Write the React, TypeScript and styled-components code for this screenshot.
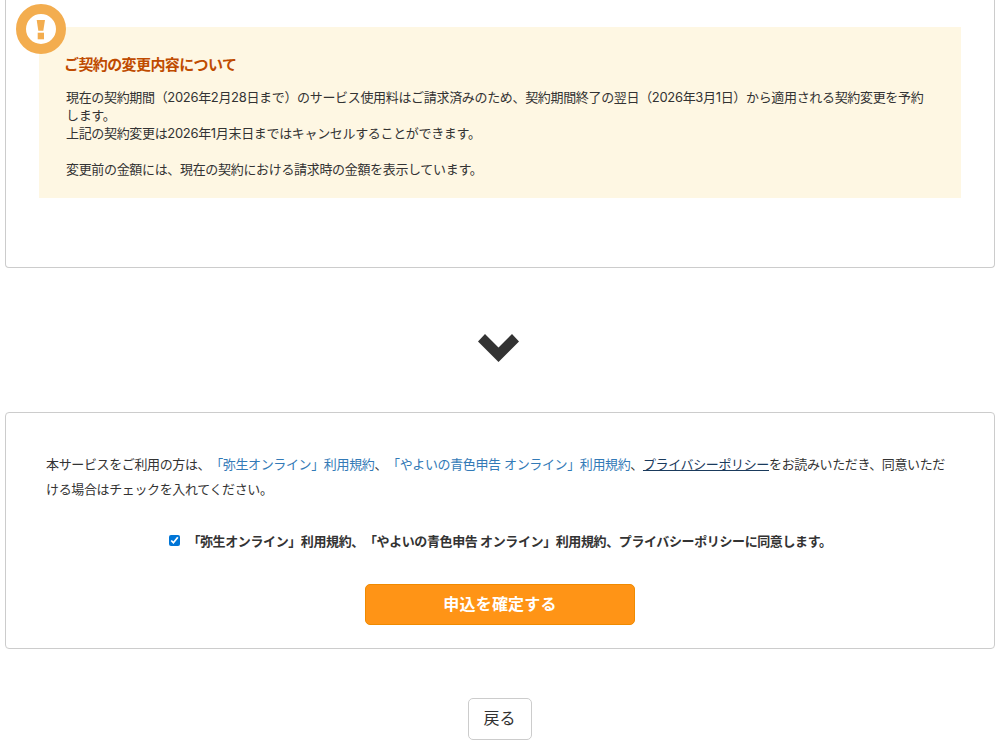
import * as React from "react";
import styled, { createGlobalStyle } from "styled-components";

const GlobalStyle = createGlobalStyle`
  html, body {
    margin: 0;
    padding: 0;
    background: #fff;
    overflow: hidden;
  }
  body {
    font-family: Inter, "Noto Sans CJK JP", sans-serif;
    font-size: 13px;
    letter-spacing: -0.33px;
    text-spacing-trim: space-all;
    color: #333;
  }
`;

const Page = styled.div`
  width: 1005px;
  height: 743px;
  padding: 0 10px 0 5px;
  box-sizing: border-box;
  overflow: hidden;
`;

const Panel = styled.section`
  border: 1px solid #ccc;
  border-radius: 4px;
  background: #fff;
  box-sizing: border-box;
`;

const NoticePanel = styled(Panel)`
  border-top: 0;
  border-radius: 0 0 4px 4px;
  padding: 27px 33px 0;
  height: 268px;
`;

const Notice = styled.div`
  position: relative;
  height: 171px;
  box-sizing: border-box;
  padding: 27px 33px 0 25px;
  background: #fef7e3;
`;

const NoticeBadge = styled.svg`
  position: absolute;
  left: -23px;
  top: -23px;
  width: 50px;
  height: 50px;
`;

const NoticeTitle = styled.h3`
  margin: 0 0 13px;
  font-size: 15px;
  line-height: 21px;
  font-weight: 700;
  letter-spacing: -0.6px;
  color: #bf4b00;
`;

const NoticeText = styled.p`
  margin: 0;
  font-size: 13px;
  line-height: 18px;
  padding-left: 2px;
`;

const ArrowRow = styled.div`
  height: 144px;
  display: flex;
  align-items: center;
  justify-content: center;
  padding: 16px 3px 0 0;
  box-sizing: border-box;
`;

const ConsentPanel = styled(Panel)`
  height: 237px;
  padding: 39px 40px 0;
`;

const ConsentText = styled.p`
  margin: 0;
  font-size: 13px;
  line-height: 25px;
  letter-spacing: -0.37px;
`;

const TermsLink = styled.a`
  color: #337ab7;
  text-decoration: none;
`;

const PolicyLink = styled.a`
  color: #1a3a5c;
  text-decoration: underline;
`;

const CheckRow = styled.label`
  display: flex;
  align-items: center;
  justify-content: center;
  gap: 7px;
  margin-top: 27px;
  height: 22px;
  font-size: 13px;
  font-weight: 700;
  letter-spacing: -0.39px;
  padding-left: 1px;
`;

const Check = styled.input`
  width: 11px;
  height: 11px;
  margin: 0;
  accent-color: #0075d6;
`;

const ButtonRow = styled.div`
  display: flex;
  justify-content: center;
  margin-top: 33px;
`;

const SubmitButton = styled.button`
  width: 270px;
  height: 41px;
  border: 1px solid #f08a00;
  border-radius: 5px;
  background: #ff9416;
  color: #fff;
  font-family: inherit;
  font-size: 16px;
  font-weight: 700;
  letter-spacing: 0.2px;
  padding: 0 0 3px;
`;

const BackRow = styled.div`
  display: flex;
  justify-content: center;
  margin-top: 49px;
  padding-right: 1px;
`;

const BackButton = styled.button`
  width: 64px;
  height: 42px;
  border: 1px solid #ccc;
  border-radius: 5px;
  background: #fff;
  color: #333;
  font-family: inherit;
  font-size: 16px;
  letter-spacing: 0;
  padding: 0 0 5px;
`;

export default function App() {
  return (
    <Page>
      <GlobalStyle />
      <NoticePanel>
        <Notice>
          <NoticeBadge viewBox="0 0 50 50">
            <circle cx="25" cy="25" r="20" fill="#fff" stroke="#f3ad4f" strokeWidth="10" />
            <path d="M20.7 16h8.3l-1.7 10.7h-5z" fill="#f3ad4f" />
            <rect x="21.7" y="28.7" width="6.3" height="6.6" fill="#f3ad4f" />
          </NoticeBadge>
          <NoticeTitle>ご契約の変更内容について</NoticeTitle>
          <NoticeText>
            現在の契約期間（2026年2月28日まで）のサービス使用料はご請求済みのため、契約期間終了の翌日（2026年3月1日）から適用される契約変更を予約します。
            <br />
            上記の契約変更は2026年1月末日まではキャンセルすることができます。
            <br />
            <br />
            変更前の金額には、現在の契約における請求時の金額を表示しています。
          </NoticeText>
        </Notice>
      </NoticePanel>
      <ArrowRow>
        <svg width="41" height="28" viewBox="0 0 41 28">
          <path d="M7 0L20.5 13.5L34 0L41 7.5L20.5 28L0 7.5z" fill="#333" />
        </svg>
      </ArrowRow>
      <ConsentPanel>
        <ConsentText>
          本サービスをご利用の方は、
          <TermsLink href="#">「弥生オンライン」利用規約</TermsLink>、
          <TermsLink href="#">「やよいの青色申告 オンライン」利用規約</TermsLink>、
          <PolicyLink href="#">プライバシーポリシー</PolicyLink>
          をお読みいただき、同意いただける場合はチェックを入れてください。
        </ConsentText>
        <CheckRow>
          <Check type="checkbox" defaultChecked />
          「弥生オンライン」利用規約、「やよいの青色申告 オンライン」利用規約、プライバシーポリシーに同意します。
        </CheckRow>
        <ButtonRow>
          <SubmitButton type="button">申込を確定する</SubmitButton>
        </ButtonRow>
      </ConsentPanel>
      <BackRow>
        <BackButton type="button">戻る</BackButton>
      </BackRow>
    </Page>
  );
}
